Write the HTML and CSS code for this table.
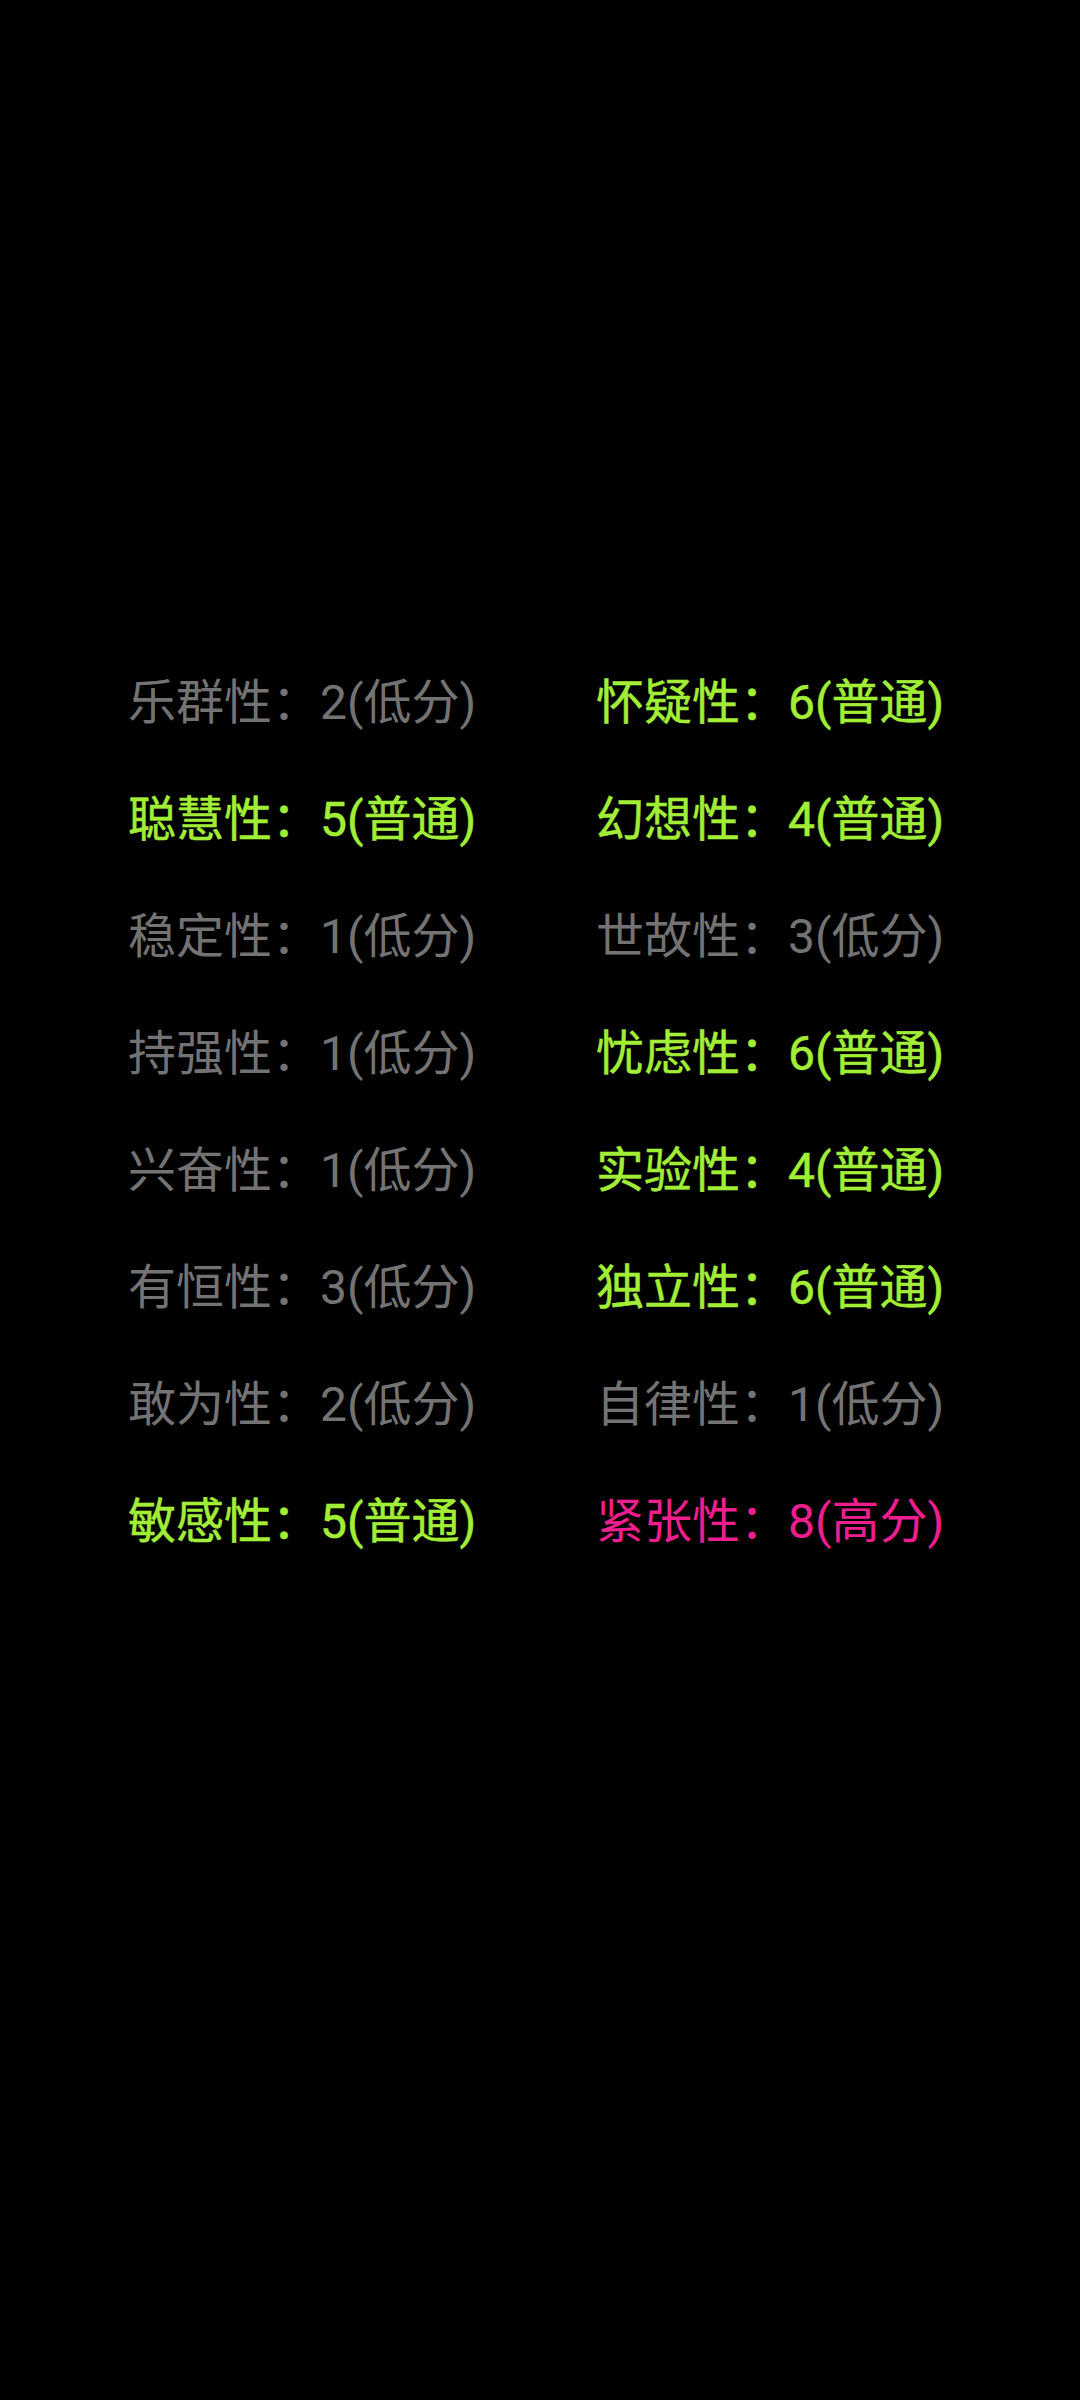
FILE: index.html
```html
<!DOCTYPE html>
<html>
  <head>
      <meta charset="utf-8">
      <title>16PF结果</title>
      <link rel="stylesheet" href="styles.css">
  </head>
  <body>
      <div id="result">
          <div class="item low">乐群性：2(低分)</div>
          <div class="item mid">怀疑性：6(普通)</div>
          <div class="item mid">聪慧性：5(普通)</div>
          <div class="item mid">幻想性：4(普通)</div>
          <div class="item low">稳定性：1(低分)</div>
          <div class="item low">世故性：3(低分)</div>
          <div class="item low">持强性：1(低分)</div>
          <div class="item mid">忧虑性：6(普通)</div>
          <div class="item low">兴奋性：1(低分)</div>
          <div class="item mid">实验性：4(普通)</div>
          <div class="item low">有恒性：3(低分)</div>
          <div class="item mid">独立性：6(普通)</div>
          <div class="item low">敢为性：2(低分)</div>
          <div class="item low">自律性：1(低分)</div>
          <div class="item mid">敏感性：5(普通)</div>
          <div class="item high">紧张性：8(高分)</div>
      </div>
  </body>
</html>
```

FILE: styles.css
```css
*{
  margin:0;
  padding:0;
}
body{
  width:1080px;
  height:2400px;
  background:#000;
  font-family:Roboto,"Noto Sans CJK SC",sans-serif;
}
#result{
  padding-top:644px;
  padding-left:128px;
  display:grid;
  grid-template-columns:468px auto;
}
.item{
  font-size:48px;
  line-height:117px;
  height:117px;
  white-space:nowrap;
}
.low{
  color:#737373;
}
.mid{
  color:#a2ee36;
  -webkit-text-stroke:0.5px #a2ee36;
}
.high{
  color:#ee1e8e;
}
```
